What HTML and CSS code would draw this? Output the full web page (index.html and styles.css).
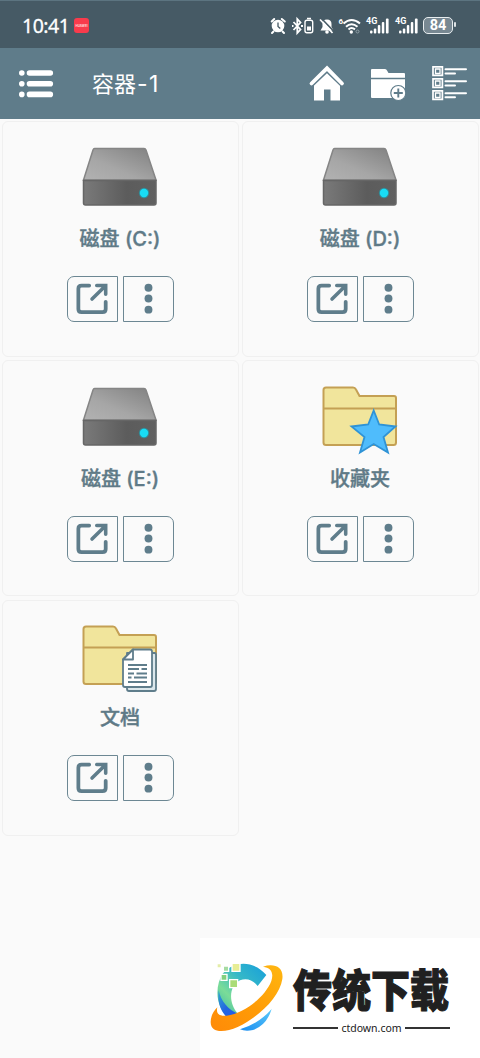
FILE: index.html
```html
<!DOCTYPE html>
<html lang="zh-CN">
<head>
<meta charset="utf-8">
<title>容器-1</title>
<link rel="stylesheet" href="styles.css">
</head>
<body>
<svg class="defs" width="0" height="0">
  <defs>
    <linearGradient id="gTop" x1="0" y1="1" x2="1" y2="0"><stop offset="0" stop-color="#b2b2b2"/><stop offset=".4" stop-color="#a6a6a6"/><stop offset="1" stop-color="#808080"/></linearGradient>
    <linearGradient id="gFront" x1="0" y1="0" x2="1" y2="0"><stop offset="0" stop-color="#7a7a7a"/><stop offset=".6" stop-color="#5c5c5c"/><stop offset="1" stop-color="#606060"/></linearGradient>
    <symbol id="drive" viewBox="0 0 80 80">
      <path d="M14.500 10.500H64Q65.500 10.500 66 12L76 42H3.500L13 12Q13.500 10.500 14.500 10.500Z" fill="url(#gTop)" stroke="#858585" stroke-width="1.500"/>
      <path d="M3.500 42.500H76V65Q76 67 74 67H5.500Q3.500 67 3.500 65Z" fill="url(#gFront)" stroke="#666" stroke-width="1.500"/>
      <circle cx="64" cy="55" r="5.200" fill="#16a9bd" opacity=".6"/><circle cx="64" cy="55" r="4.200" fill="#18dcf5"/>
    </symbol>
    <symbol id="folder" viewBox="0 0 80 80">
      <path d="M6 9.500H33Q35 9.500 36 11.500L39.500 18H74Q76 18 76 20V64.500Q76 67 73.500 67H6Q3.500 67 3.500 64.500V12Q3.500 9.500 6 9.500Z" fill="#f1e59c" stroke="#c4a054" stroke-width="2"/>
      <path d="M3.500 30.500H76" stroke="#c4a054" stroke-width="1.800"/>
    </symbol>
    <symbol id="open" viewBox="0 0 52 46">
      <path d="M22.500 8.700H14.500Q11 8.700 11 12V33.500Q11 37 14.500 37H36.500Q40 37 40 33.500V26" fill="none" stroke="#5f7d8b" stroke-width="4" stroke-linecap="round"/>
      <path d="M25.500 23L38.500 10.200M30.500 8.700H40V18" fill="none" stroke="#5f7d8b" stroke-width="3.800" stroke-linecap="round"/>
    </symbol>
    <symbol id="more" viewBox="0 0 52 46"><g fill="#5f7d8b"><circle cx="26" cy="11" r="4.200"/><circle cx="26" cy="22.500" r="4.200"/><circle cx="26" cy="34.300" r="4.200"/></g></symbol>
    <symbol id="signal" viewBox="0 0 24 18"><g fill="#fff"><rect x="3" y="13.500" width="2.500" height="3" rx="1"/><rect x="6.800" y="11.500" width="2.500" height="5" rx="1"/><rect x="10.800" y="8" width="2.500" height="8.500" rx="1"/><rect x="14.800" y="5" width="2.500" height="11.500" rx="1"/><rect x="18.900" y="1.500" width="2.700" height="15" rx="1"/></g></symbol>
  </defs>
</svg>

<div class="screen">
  <header class="status">
    <span class="clock">10:41</span>
    <span class="app-badge"><i>HUAWEI</i></span>
    <svg class="status-icons" width="92" height="22" viewBox="270 14 92 22">
      <circle cx="278" cy="25" r="6.300" fill="#fff"/><path d="M271.700 20.500L274.200 18M284.800 20.500L281.800 18M273.500 30.500L272 32M282.500 30.500L284 32" stroke="#fff" stroke-width="2" stroke-linecap="round"/><path d="M278 21.500V25.500L280.300 27.500" stroke="#465a65" stroke-width="1.300" fill="none"/>
      <path d="M293.500 21L300.500 28.500L297.300 32V18L300.500 21.500L293.500 29M292 25H293.500M301 25H303" fill="none" stroke="#fff" stroke-width="1.800"/>
      <rect x="305" y="19.300" width="7.700" height="12.500" rx="2" fill="none" stroke="#fff" stroke-width="1.400"/><path d="M307 17.500H311" stroke="#fff" stroke-width="1.500"/><rect x="307" y="25.500" width="4" height="4" fill="#fff"/>
      <path d="M320.500 29.500L322.500 26V23Q322.500 18.500 327 18.500Q331.500 18.500 331.500 23V26L333.500 29.500Z" fill="#fff"/><circle cx="327" cy="31" r="1.800" fill="#fff"/><path d="M321.500 17.500L334 30.500" stroke="#465a65" stroke-width="1.600"/><path d="M320 18.500L332.500 32" stroke="#fff" stroke-width="1.700"/>
      <path d="M343.500 22.500Q351.500 15.500 360 22.500M346 25.700Q351.500 20.700 357.500 25.700M348.500 28.400Q351.500 25.700 355 28.400" fill="none" stroke="#fff" stroke-width="2"/><circle cx="351.300" cy="31" r="1.700" fill="#fff"/><circle cx="357.500" cy="30.500" r="1.500" fill="none" stroke="#91a0a8"/>
      <text x="338.500" y="23" class="tiny">6</text>
    </svg>
    <span class="cell"><b>4G</b><svg width="24" height="18"><use href="#signal"/></svg></span>
    <span class="cell"><b>4G</b><svg width="24" height="18"><use href="#signal"/></svg></span>
    <span class="battery">84</span>
  </header>

  <nav class="toolbar">
    <svg class="menu" width="36" height="30" viewBox="18 69 36 30"><g stroke="#fff" stroke-width="5.600" stroke-linecap="round"><path d="M29.500 73H50.300M29.500 83.700H50.300M29.500 94.400H50.300"/><path d="M21.800 73h.01M21.800 83.700h.01M21.800 94.400h.01"/></g></svg>
    <h1>容器<span>-1</span></h1>
    <svg class="actions" width="160" height="40" viewBox="308 64 160 40">
      <path d="M314 84.500L327 71.500L340 84.500V100.500H330.500V89.500H324V100.500H314Z" fill="#fff"/>
      <path d="M311.500 83.700L327 69L342 83.700" stroke="#5f7c8a" stroke-width="6" fill="none"/><path d="M311.500 83.500L327 68.300L342 83.500" stroke="#fff" stroke-width="3.800" fill="none" stroke-linecap="round"/>
      <path d="M371 70Q371 69 372 69H385Q386.500 69 387 70.500L388.500 73H404Q405 73 405 74V77.800H371ZM371 79.200H405V97Q405 98 404 98H372Q371 98 371 97Z" fill="#fff"/>
      <circle cx="398.300" cy="93" r="7.500" fill="#fff" stroke="#5f7c8a" stroke-width="1.200"/><path d="M398.300 88.500V97.500M393.800 93H402.800" stroke="#5f7c8a" stroke-width="1.900"/>
      <g fill="none" stroke="#fff"><path d="M433 66.800h9.400v8.600h-9.400zM433 78.800h9.400v8.600h-9.400zM433 90.800h9.400v8.600h-9.400z" stroke-width="1.700"/><path d="M435.500 69h4.500v4.500h-4.500zM435.500 81h4.500v4.500h-4.500zM435.500 93h4.500v4.500h-4.500z" stroke-width="1.300"/><path d="M445.500 69.200H466M445.500 81.200H466M445.500 93.200H466M445.500 73.500H455M445.500 85.500H455M445.500 97.300H455" stroke-width="2" stroke-linecap="round"/></g>
    </svg>
  </nav>

  <main class="grid">
    <section class="card"><svg class="icon"><use href="#drive"/></svg><h2>磁盘 (C:)</h2><div class="buttons"><svg><use href="#open"/></svg><svg><use href="#more"/></svg></div></section>
    <section class="card"><svg class="icon"><use href="#drive"/></svg><h2>磁盘 (D:)</h2><div class="buttons"><svg><use href="#open"/></svg><svg><use href="#more"/></svg></div></section>
    <section class="card"><svg class="icon"><use href="#drive"/></svg><h2>磁盘 (E:)</h2><div class="buttons"><svg><use href="#open"/></svg><svg><use href="#more"/></svg></div></section>
    <section class="card"><svg class="icon" viewBox="0 0 80 80"><use href="#folder"/><path d="M53.700 32.500L59.200 46.500L75.500 48.500L63.500 59L68 74.500L53.700 66L40 74.500L44.500 59L31.500 48.500L48.200 46.500Z" fill="#4fbcfc" stroke="#2f93d6" stroke-width="1.800"/></svg><h2>收藏夹</h2><div class="buttons"><svg><use href="#open"/></svg><svg><use href="#more"/></svg></div></section>
    <section class="card"><svg class="icon" viewBox="0 0 80 80"><use href="#folder"/>
      <g fill="#fff" stroke="#5f7d8b" stroke-width="1.800" stroke-linejoin="round"><path d="M47 36H74.500Q76 36 76 37.500V72Q76 74 74 74H49Q47 74 47 72Z" fill="#dce8ec"/><path d="M53 32.500H70Q72 32.500 72 34.500V68Q72 70 70 70H45Q43 70 43 68V42.500Z"/><path d="M53 32.500V42.500H43Z"/></g>
      <path d="M48 48H67M48 52H59M61.500 52H67M48 56.500H54M56.500 56.500H67M48 60.500H51.500M54 60.500H67M48 65H67" stroke="#5f7d8b" stroke-width="1.900"/></svg><h2>文档</h2><div class="buttons"><svg><use href="#open"/></svg><svg><use href="#more"/></svg></div></section>
  </main>

  <aside class="watermark">
    <svg class="logo" width="85" height="85" viewBox="0 0 255 255">
      <defs>
        <linearGradient id="gC" x1="1" y1="0" x2=".1" y2="1"><stop offset="0" stop-color="#169edb"/><stop offset=".4" stop-color="#35b8c8"/><stop offset=".7" stop-color="#7bdc98"/><stop offset="1" stop-color="#38b8a8"/></linearGradient>
        <linearGradient id="gB" x1="0" y1="0" x2="1" y2="1"><stop offset="0" stop-color="#32a7d0"/><stop offset=".5" stop-color="#2366e0"/><stop offset="1" stop-color="#2455e8"/></linearGradient>
        <linearGradient id="gO" x1="0" y1="1" x2="1" y2="0"><stop offset="0" stop-color="#ff8a08"/><stop offset=".5" stop-color="#ff9c06"/><stop offset="1" stop-color="#ffb711"/></linearGradient>
        <linearGradient id="gL" x1="0" y1="1" x2="1" y2="0"><stop offset="0" stop-color="#1b8df0"/><stop offset="1" stop-color="#5ac9fa"/></linearGradient>
      </defs>
      <path d="M100 28C130 22 162 34 184 60L158 93C143 74 124 68 105 76C73 91 68 142 99 177L79 192C31 165 27 95 54 55Q72 34 100 28Z" fill="url(#gC)"/>
      <path d="M41 106C48 139 69 164 100 177L74 193C48 176 36 141 41 106Z" fill="url(#gB)"/>
      <path d="M105 223Q163 205 200 162Q185 211 144 225Q121 230 105 223Z" fill="url(#gL)"/>
      <path d="M174 35C208 24 237 36 232 72C224 125 164 185 98 216C58 234 17 235 17 201C17 183 26 168 37 157C32 176 43 185 65 182C119 174 181 125 199 78C207 53 198 38 174 35Z" fill="url(#gO)"/>
      <g stroke="#fff" stroke-width="4"><path d="M81 25h24v24H81z" fill="#e7ed94"/><path d="M74 74h24v24H74z" fill="#a9dc78"/><path d="M48 58h18v18H48z" fill="#83d07d"/><path d="M55 33h16v16H55z" fill="#a5dba0"/><path d="M36 26h13v13H36z" fill="#e4eda8"/></g>
    </svg>
    <div class="brand"><strong>传统下载</strong><span>ctdown.com</span></div>
  </aside>
</div>
</body>
</html>
```

FILE: styles.css
```css
* { box-sizing: border-box; }
body { margin: 0; background: #fafafa; font-family: Inter, "Noto Sans CJK SC", sans-serif; }
svg { display: block; flex: none; }
.defs { position: absolute; }
.screen { position: relative; width: 480px; height: 1058px; overflow: hidden; background: #fafafa; }
.status { display: flex; align-items: center; height: 48px; padding: 2px 0 0 22px; background: #465a65; border-top: 1px solid #5c7480; color: #fff; }
.clock { width: 47px; font: 400 19.500px/24px "Noto Sans", sans-serif; letter-spacing: -0.500px; white-space: nowrap; -webkit-text-stroke: 0.300px #fff; }
.app-badge { display: flex; align-items: center; justify-content: center; width: 15px; height: 15px; margin-left: 5px; border-radius: 3px; background: #f93b4c; }
.app-badge i { font: 700 3px/4px Inter, sans-serif; color: #ffd9dc; }
.status-icons { margin-left: 181px; }
.tiny { font: 700 8px Roboto, sans-serif; fill: #fff; }
.cell { position: relative; width: 24px; margin-left: 5px; }
.cell b { position: absolute; left: -1px; top: 0; font: 700 9px/9px Roboto, sans-serif; }
.battery { position: relative; width: 30px; height: 17px; margin-left: 3px; border: 1.500px solid #e8edef; border-radius: 5px; background: #788892; font: 700 14.500px/15px Roboto, sans-serif; text-align: center; }
.battery::after { content: ""; position: absolute; right: -4px; top: 4px; width: 2px; height: 5px; border-radius: 1px; background: #dce2e5; }
.toolbar { display: flex; align-items: center; height: 71px; padding: 0 12px 0 18px; background: #5f7c8a; color: #fff; }
.toolbar h1 { margin: 0 0 0 38px; font-size: 22px; line-height: 30px; font-weight: 400; white-space: nowrap; }
.toolbar h1 span { margin-left: 1px; font-size: 23px; letter-spacing: 1.500px; }
.actions { margin-left: auto; }
.grid { display: grid; grid-template-columns: 237px 237px; grid-auto-rows: 236px; gap: 3.500px 3px; padding: 1.500px 1.500px 0; }
.card { display: flex; flex-direction: column; align-items: center; padding-top: 16.500px; border: 1.500px solid #f0f0f0; border-radius: 6px; background: #fafafa; }
.icon { width: 80px; height: 80px; }
.card h2 { margin: 7px 0 0; font-size: 20px; line-height: 28px; font-weight: 500; color: #5f7a87; white-space: nowrap; -webkit-text-stroke: 0.400px #5f7a87; }
.buttons { display: flex; gap: 5px; margin: 23px 0 0; }
.buttons svg { width: 51px; height: 46px; border: 1.500px solid #6c8793; }
.buttons svg:first-child { border-radius: 7px 0 0 7px; }
.buttons svg:last-child { border-radius: 0 7px 7px 0; }
.watermark { position: absolute; right: 0; bottom: 0; display: flex; width: 280px; height: 120px; padding: 17px 0 0 5px; background: #fff; }
.brand { display: flex; flex-direction: column; width: 157px; margin: 9px 0 0 3px; color: #202020; }
.brand strong { font: 900 39px/50px "Noto Sans CJK SC", sans-serif; white-space: nowrap; transform: translateY(-1px) scaleY(1.130); -webkit-text-stroke: 1px #202020; }
.brand span { display: flex; align-items: center; gap: 3px; margin-top: 6px; font: 400 10.500px/16px "Noto Sans", sans-serif; }
.brand span::before, .brand span::after { content: ""; flex: 1; height: 2px; background: #333; }
```
